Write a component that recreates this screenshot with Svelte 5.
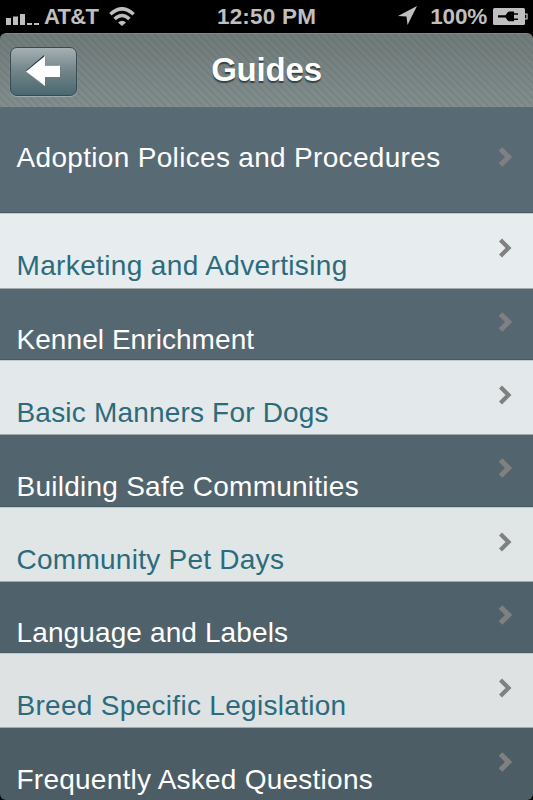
<script>
  const guides = [
    { title: 'Adoption Polices and Procedures', height: 106, pad: 34, arrow: 37.5, tracking: 0.32, bg: '#586a74' },
    { title: 'Marketing and Advertising', height: 76, pad: 36, arrow: 23.2, tracking: 0.36, bg: '#e7ecef' },
    { title: 'Kennel Enrichment', height: 71, pad: 35, arrow: 21.5, tracking: 0.06, bg: '#556771' },
    { title: 'Basic Manners For Dogs', height: 75, pad: 36, arrow: 23, tracking: 0.19, bg: '#e3e8ea' },
    { title: 'Building Safe Communities', height: 72, pad: 36, arrow: 22.3, tracking: 0.25, bg: '#52646d' },
    { title: 'Community Pet Days', height: 75, pad: 36, arrow: 22.8, tracking: 0.26, bg: '#e0e5e6' },
    { title: 'Language and Labels', height: 71, pad: 35, arrow: 22.2, tracking: 0.12, bg: '#4f616a' },
    { title: 'Breed Specific Legislation', height: 75, pad: 36, arrow: 23, tracking: 0.3, bg: '#dee2e3' },
    { title: 'Frequently Asked Questions', height: 72, pad: 36, arrow: 23, tracking: 0.24, bg: '#4c5d66' }
  ];
</script>

<div class="phone">
  <div class="status">
    <div class="left">
      <svg class="signal" width="33" height="12" viewBox="0 0 33 12" fill="#bfbfbf">
        <path d="M0 5h5v7H0zM7 3.5h5V12H7zM14 1h5v11h-5zM21 10h5v2h-5zM28 10h5v2h-5z" />
      </svg>
      <span>AT&amp;T</span>
      <svg class="wifi" width="26" height="19" viewBox="0 0 26 19" fill="none" stroke="#bfbfbf" stroke-width="3.5">
        <path d="M1.4 7.3Q13-3.7 24.6 7.3M5.6 12Q13 5 20.4 12" />
        <path d="M9 15.5Q13 12 17 15.5L13 19z" fill="#bfbfbf" stroke="none" />
      </svg>
    </div>
    <span class="time">12:50 PM</span>
    <div class="right">
      <svg class="location" width="19" height="19" viewBox="0 0 19 19" fill="#bfbfbf"><path d="M19 0L9.5 19 8.5 10.5 0 10z" /></svg>
      <span class="percent">100%</span>
      <svg class="battery" width="35" height="17" viewBox="0 0 35 17">
        <rect width="32" height="17" rx="1.5" fill="#bfbfbf" />
        <path d="M32 6.2h2v4.6h-2" fill="none" stroke="#bfbfbf" stroke-width="1.3" />
        <path d="M5 7.3h7.5l2-2.8q.8-1 2-1H21v1.8h4v1.5h-4v3.7h4V12h-4v1.3h-4.5q-1.2 0-2-1l-2-2.8H5z" fill="#000" />
      </svg>
    </div>
  </div>

  <header>
    <button aria-label="Back">
      <svg width="37" height="33" viewBox="0 0 37 33">
        <path d="M1 15.5L19 0v10h15v11H19v9z" fill="#273f48" />
        <path d="M1 16.5L20 1v9.5h15V22H20v9z" fill="#fff" />
      </svg>
    </button>
    <h1>Guides</h1>
  </header>

  <main>
    {#each guides as guide, i}
      <div
        class="row"
        class:light={i % 2 === 1}
        style="height: {guide.height}px; --row-color: {guide.bg}; --text-top: {guide.pad}px; --arrow-top: {guide.arrow}px; --tracking: {guide.tracking}px"
      >
        <span class="title">{guide.title}</span>
        <svg class="chevron" width="18" height="22" viewBox="0 0 18 22" fill="none">
          <path d="M3.5 3L11.5 11 3.5 19" stroke="#808080" stroke-width={i % 2 ? 4.2 : 5.2} />
        </svg>
      </div>
    {/each}
  </main>
</div>

<style>
  :global(body) { background: #000; }
  .phone {
    width: 533px; height: 800px; overflow: hidden; background: #000;
    font-family: "Liberation Sans", Arial, sans-serif;
  }
  .status {
    height: 33px; display: grid; grid-template-columns: 1fr auto 1fr;
    color: #bfbfbf; font-size: 22.5px; font-weight: 700; line-height: 33px;
  }
  .left, .right { display: flex; align-items: flex-start; }
  .left { padding-left: 6px; }
  .left span { width: 54px; margin-left: 5px; font-size: 22px; letter-spacing: -0.7px; }
  .time { letter-spacing: 0.2px; }
  .signal { margin-top: 13px; }
  .wifi { margin: 6.5px 0 0 11px; }
  .right { justify-content: flex-end; padding-right: 5px; }
  .location { margin: 6px 13px 0 0; }
  .percent { margin-right: 6px; letter-spacing: -0.2px; }
  .battery { margin-top: 7.5px; }
  header {
    height: 74px; box-sizing: border-box; display: grid; grid-template-columns: 78px 1fr 78px;
    border-radius: 6px 6px 0 0; border-top: 1px solid #7e8988;
    background: repeating-linear-gradient(45deg, transparent 0, rgba(30, 50, 50, .1) 1.5px, transparent 3px 5.3px),
      linear-gradient(#6f7a79, #828d8d);
  }
  button {
    width: 67px; height: 49px; margin: 13px 0 0 10px; padding: 0; box-sizing: border-box;
    display: flex; align-items: center; justify-content: center;
    border: 1.5px solid #394b52; border-radius: 7px;
    background: linear-gradient(#a5b1b4, #708388 50%, #4b6870);
    box-shadow: 0 1px 1px #a2adae;
  }
  h1 {
    margin: 16px 0 0; color: #fff; text-align: center; font-size: 33px; line-height: 40px;
    letter-spacing: -0.2px; text-shadow: 0 2px 1px #344244;
  }
  .row {
    box-sizing: border-box; display: flex; justify-content: space-between; padding: 0 18.5px 0 16.5px;
    color: #fff; background: var(--row-color); border-bottom: 1px solid #455b66;
  }
  .row.light { color: #2b6b7c; border-top: 1px solid #c5cacc; border-bottom-color: #a3a8aa; }
  .title {
    margin-top: var(--text-top); font-size: 28px; line-height: 32px;
    letter-spacing: var(--tracking); white-space: nowrap;
  }
  .chevron { margin-top: var(--arrow-top); flex: none; filter: blur(.4px); }
  .row:first-child { border-top: 1px solid #5e6c79; }
  .row:last-child { border-bottom: 0; border-radius: 0 0 6px 6px; }
</style>
